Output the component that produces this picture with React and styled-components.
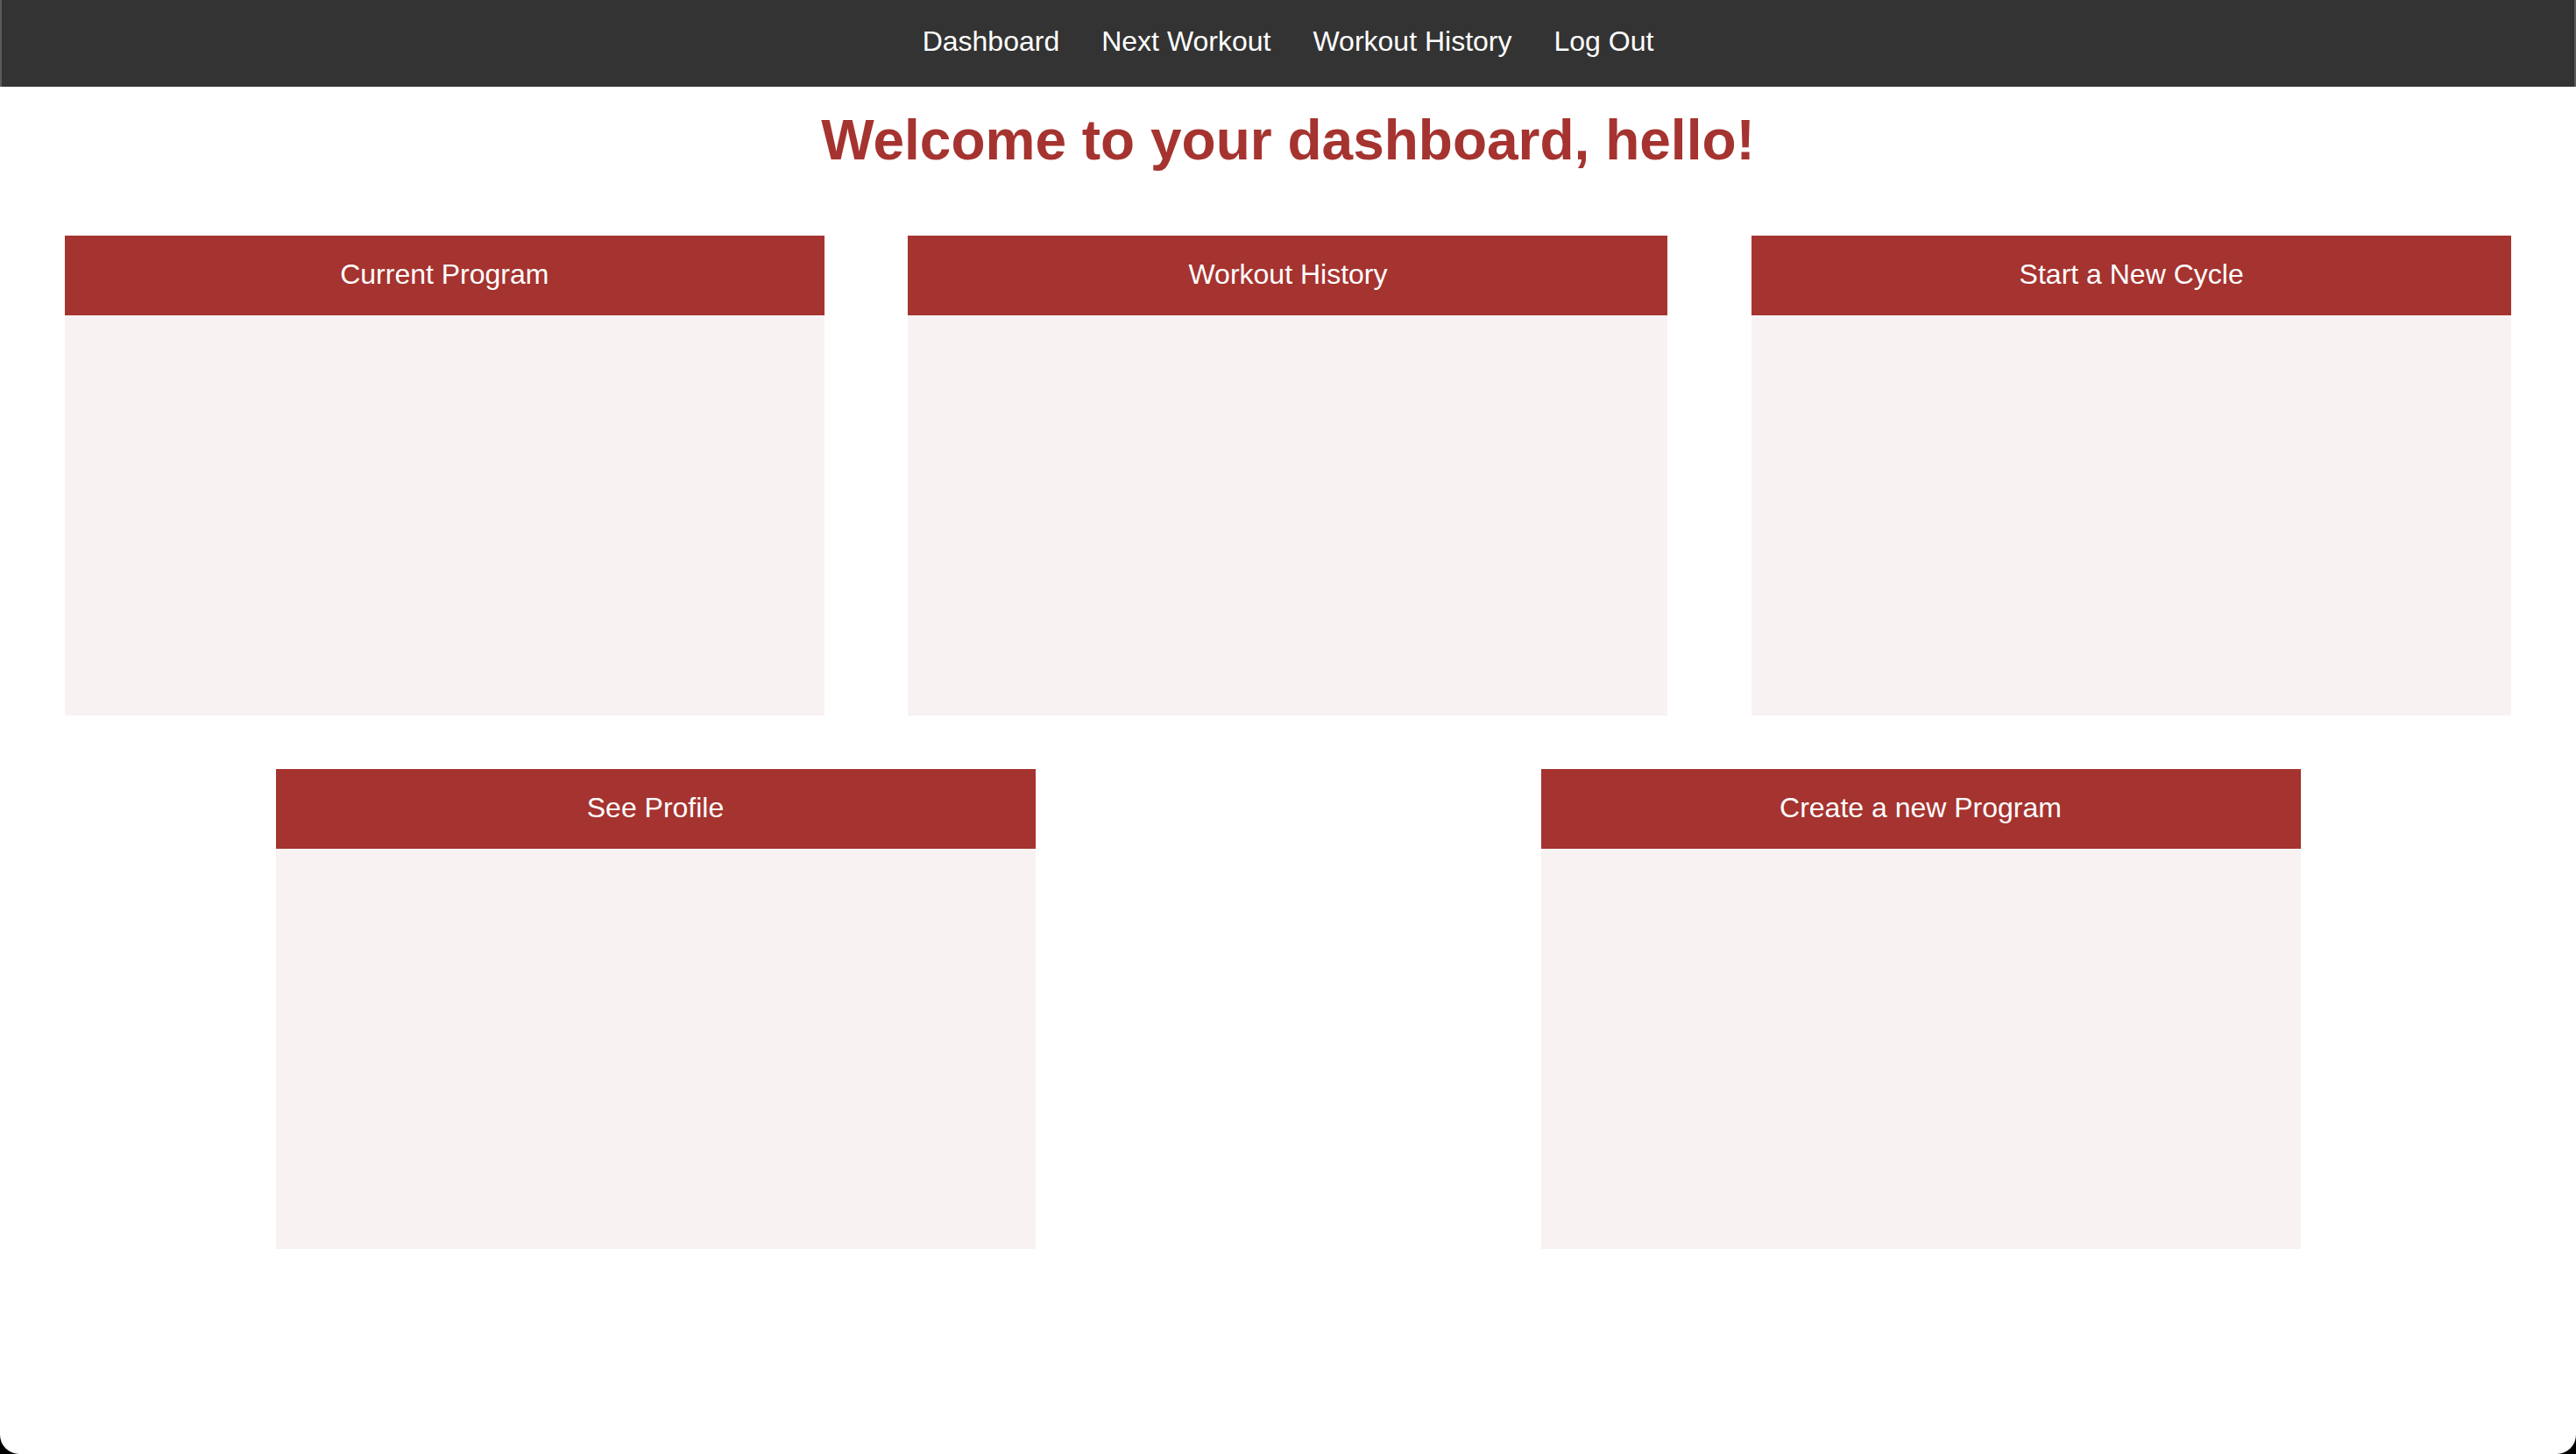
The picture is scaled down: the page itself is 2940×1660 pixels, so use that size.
import React from 'react'
import styled, { createGlobalStyle } from 'styled-components'

const GlobalStyle = createGlobalStyle`
  html, body {
    margin: 0;
    padding: 0;
    background: #000;
  }
  body {
    font-family: "Liberation Sans", Arial, sans-serif;
  }
`

const navLinks = ['Dashboard', 'Next Workout', 'Workout History', 'Log Out']

const topCards = ['Current Program', 'Workout History', 'Start a New Cycle']
const bottomCards = ['See Profile', 'Create a new Program']

const Dashboard = () => {
  return (
    <Shell>
      <GlobalStyle />
      <NavBar>
        {navLinks.map((link) => (
          <NavLink key={link} href="#">{link}</NavLink>
        ))}
      </NavBar>
      <Title>Welcome to your dashboard, hello!</Title>
      <CardRow>
        {topCards.map((title) => (
          <Card key={title}>
            <CardHeader>{title}</CardHeader>
          </Card>
        ))}
      </CardRow>
      <CardRow>
        {bottomCards.map((title) => (
          <Card key={title}>
            <CardHeader>{title}</CardHeader>
          </Card>
        ))}
      </CardRow>
    </Shell>
  )
}

export default Dashboard

// 전체 틀
const Shell = styled.div`
  min-height: 100vh;
  background: #fff;
  border-radius: 0 0 22px 22px;
  overflow: hidden;
`

// 상단 메뉴
const NavBar = styled.nav`
  height: 99px;
  box-sizing: border-box;
  padding-bottom: 5px;
  background: #333333;
  border-left: 2px solid #5a5a5a;
  border-right: 2px solid #5a5a5a;
  display: flex;
  justify-content: center;
  align-items: center;
`

const NavLink = styled.a`
  color: #fff;
  font-size: 32px;
  text-decoration: none;
  padding: 0 24px;
`

const Title = styled.h1`
  margin: 24px 0 72px;
  text-align: center;
  font-size: 64px;
  font-weight: bold;
  color: #a5332f;
`

// 카드
const CardRow = styled.div`
  display: flex;
  justify-content: space-around;
  padding: 0 26px;
  margin-bottom: 61px;
`

const Card = styled.div`
  width: 867px;
  height: 548px;
  background: #f8f2f2;
`

const CardHeader = styled.div`
  height: 91px;
  box-sizing: border-box;
  padding-top: 26px;
  background: #a5332f;
  color: #fff;
  font-size: 32px;
  text-align: center;
`
